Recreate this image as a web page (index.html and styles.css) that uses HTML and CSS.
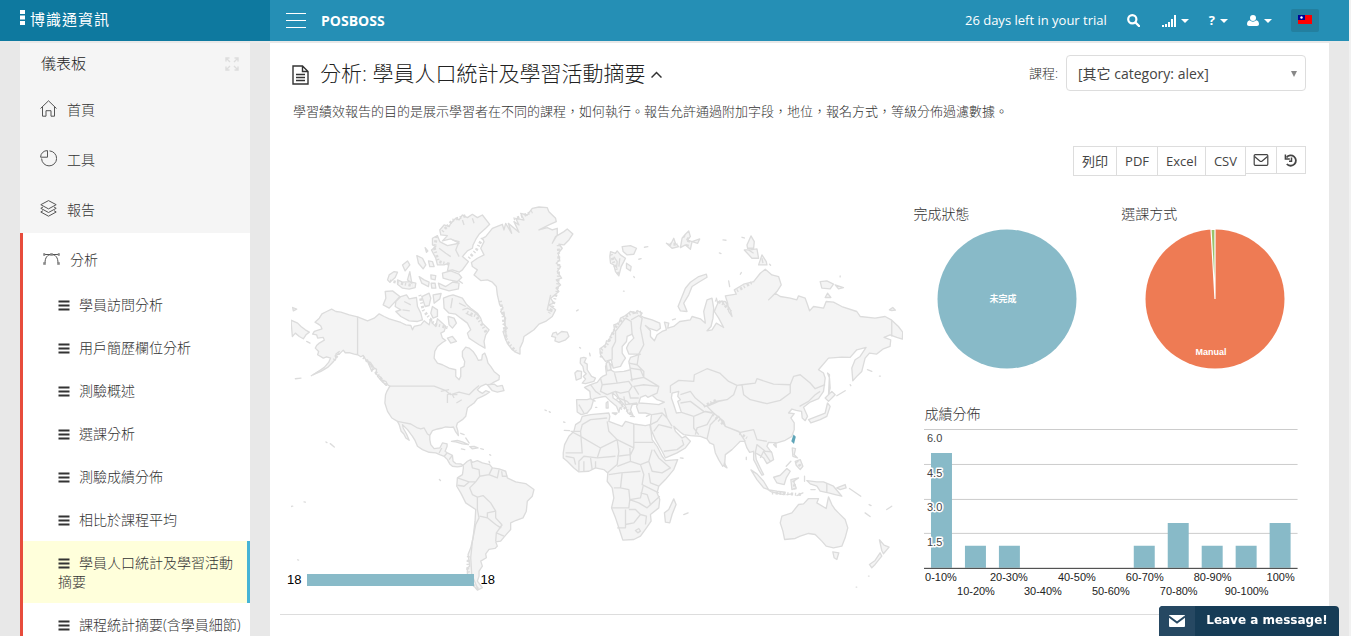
FILE: index.html
```html
<!DOCTYPE html>
<html lang="zh-Hant">
<head>
<meta charset="utf-8">
<title>POSBOSS</title>
<link rel="stylesheet" href="styles.css">
</head>
<body>
<svg class="defs" aria-hidden="true">
  <symbol id="lines" viewBox="0 0 12 11"><path d="M.5 1.500h11M.5 5.500h11M.5 9.500h11" stroke="currentColor" stroke-width="1.800"/></symbol>
  <symbol id="caret" viewBox="0 0 8 4"><path d="M0 0h8L4 4z" fill="currentColor"/></symbol>
</svg>

<header class="topbar">
  <a class="brand" href="#">
    <svg width="5" height="16" viewBox="0 0 5 16"><path d="M0 0h5v4H0zM0 5.500h5v4H0zM0 11h5v4H0z" fill="#fff"/></svg>
    <span>博識通資訊</span>
  </a>
  <div class="topmain">
    <button class="menu" aria-label="Menu"><svg width="20" height="15" viewBox="0 0 20 15"><path d="M0 .5h20M0 7.500h20M0 14.500h20" stroke="#fff"/></svg></button>
    <a class="site" href="#">POSBOSS</a>
    <span class="trial">26 days left in your trial</span>
    <button class="tool search" aria-label="Search"><svg width="13" height="13" viewBox="0 0 13 13"><circle cx="5.300" cy="5.300" r="4.100" fill="none" stroke="#fff" stroke-width="2.200"/><path d="M8.500 8.500 12 12" stroke="#fff" stroke-width="2.400" stroke-linecap="round"/></svg></button>
    <button class="tool signal" aria-label="Status"><svg width="14" height="12" viewBox="0 0 14 12"><path d="M0 10h2v2H0zM3 9h2v3H3zM6 7h2v5H6zM9 4h2v8H9zM12 0h2v12h-2z" fill="#fff"/></svg><svg width="8" height="4"><use href="#caret"/></svg></button>
    <button class="tool help" aria-label="Help"><b>?</b><svg width="8" height="4"><use href="#caret"/></svg></button>
    <button class="tool user" aria-label="User"><svg width="12" height="11" viewBox="0 0 12 11"><circle cx="6" cy="3" r="3" fill="#fff"/><path d="M2.700 5.200C1 5.500 0 7 0 9c0 1.300.8 2 2 2h8c1.200 0 2-.7 2-2 0-2-1-3.500-2.700-3.800a4.500 4.500 0 0 1-6.600 0z" fill="#fff"/></svg><svg width="8" height="4"><use href="#caret"/></svg></button>
    <button class="flag" aria-label="Language"><svg width="14" height="9" viewBox="0 0 14 9"><path d="M0 0h14v9H0z" fill="#f00"/><path d="M0 0h7v5H0z" fill="#000095"/><circle cx="3.500" cy="2.500" r="1.200" fill="#fff"/></svg></button>
  </div>
</header>

<div class="page">
  <nav class="side">
    <div class="side-title"><span>儀表板</span>
      <svg width="14" height="14" viewBox="0 0 14 14" fill="none" stroke="#ddd" stroke-width="1.400"><path d="M1 4.500V1h3.500M1 1l4 4M9.500 1H13v3.500M13 1 9 5M1 9.500V13h3.500M1 13l4-4M13 9.500V13H9.500M13 13 9 9"/></svg>
    </div>
    <a class="item" href="#"><svg width="17" height="17" viewBox="0 0 17 17" fill="none" stroke="#555"><path d="M.5 8.500 8.500.8l8 7.700M2.500 7v9.200h3.500v-5.500h5v5.500h3.500V7"/></svg>首頁</a>
    <a class="item" href="#"><svg width="17" height="17" viewBox="0 0 17 17" fill="none" stroke="#555"><path d="M9.500.9A7.500 7.500 0 1 1 1.600 8.500"/><path d="M7.500 7.200V.6a6.600 6.600 0 0 0-6.900 6.600z"/></svg>工具</a>
    <a class="item" href="#"><svg width="17" height="17" viewBox="0 0 17 17" fill="none" stroke="#555"><path d="M8.500.6.8 4.700l7.700 4.200 7.700-4.200zM3 7 .8 8.300l7.700 4.200 7.700-4.200L14 7M3 10.700.8 12l7.700 4.200 7.700-4.200-2.200-1.300"/></svg>報告</a>
    <section class="open">
      <a class="item" href="#"><svg width="17" height="17" viewBox="0 0 17 17" fill="none" stroke="#555"><path d="M2 4.500h13M2 13C2 7.500 4.500 4.500 8.500 4.500S15 7.500 15 13"/><path d="M.5 3.500h1.500v2H.5zM7.500 3.500h2v2h-2zM15 3.500h1.500v2H15zM.5 12.500h2v2h-2zM14.500 12.500h2v2h-2z" stroke="#888" fill="#888" stroke-width=".6"/></svg>分析</a>
      <a class="sub" href="#"><svg width="12" height="11"><use href="#lines"/></svg>學員訪問分析</a>
      <a class="sub" href="#"><svg width="12" height="11"><use href="#lines"/></svg>用戶簡歷欄位分析</a>
      <a class="sub" href="#"><svg width="12" height="11"><use href="#lines"/></svg>測驗概述</a>
      <a class="sub" href="#"><svg width="12" height="11"><use href="#lines"/></svg>選課分析</a>
      <a class="sub" href="#"><svg width="12" height="11"><use href="#lines"/></svg>測驗成績分佈</a>
      <a class="sub" href="#"><svg width="12" height="11"><use href="#lines"/></svg>相比於課程平均</a>
      <a class="sub current" href="#"><svg width="12" height="11"><use href="#lines"/></svg>學員人口統計及學習活動摘要</a>
      <a class="sub" href="#"><svg width="12" height="11"><use href="#lines"/></svg>課程統計摘要(含學員細節)</a>
    </section>
  </nav>

  <main class="main">
    <div class="head">
      <h1>
        <svg width="17" height="20" viewBox="0 0 17 20" fill="none" stroke="#333" stroke-width="1.400"><path d="M1 1h9.500L16 6.500V19H1zM10.500 1v5.500H16M4 9.500h9M4 12.500h9M4 15.500h9"/></svg>
        <span>分析: 學員人口統計及學習活動摘要</span>
        <svg width="11" height="7" viewBox="0 0 11 7" fill="none" stroke="#333" stroke-width="1.500"><path d="M.5 6.500l5-5 5 5"/></svg>
      </h1>
      <label class="course-label" for="course">課程:</label>
      <div class="select">
        <select id="course"><option>[其它 category: alex]</option></select>
        <svg width="6" height="6" viewBox="0 0 6 6"><path d="M0 0h6L3 6z" fill="#888"/></svg>
      </div>
    </div>
    <p class="intro">學習績效報告的目的是展示學習者在不同的課程，如何執行。報告允許通過附加字段，地位，報名方式，等級分佈過濾數據。</p>
    <div class="exports">
      <button>列印</button><button>PDF</button><button>Excel</button><button>CSV</button><button class="ico" aria-label="Email"><svg width="16" height="12" viewBox="0 0 16 12" fill="none" stroke="#444" stroke-width="1.200"><rect x="1.200" y=".7" width="13.600" height="10.600" rx="1"/><path d="M1.500 2.500 6.800 7q1.200.9 2.400 0l5.300-4.500"/></svg></button><button class="ico" aria-label="History"><svg width="14" height="13" viewBox="0 0 14 13" fill="none" stroke="#444" stroke-width="1.800"><path d="M2.500 3.500A5.200 5.200 0 1 1 2.800 10"/><path d="M1.400.5v4.400h4.400M7.500 3.500v3.700H5" stroke-width="1.500"/></svg></button>
    </div>

    <div class="report">
      <div class="map">
        <svg class="world" viewBox="15 30 1840 1170" role="img" aria-label="World map">
          <g class="land">
            <path d="M215 366 190 360 165 352 150 350 137 343 122 350 108 357 100 370 87 382 97 388 104 393 108 402 85 410 80 418 92 420 95 430 112 428 115 436 100 445 92 452 88 460 98 470 95 480 112 490 122 486 134 490 128 503 115 518 100 528 82 540 105 530 125 518 140 503 150 492 148 482 160 478 172 466 178 474 192 474 205 478 215 480 225 486 232 482 240 496 255 505 262 518 272 524 270 538 285 548 290 558 300 560 305 570 312 574 303 590 299 600 297 625 305 650 318 670 335 680 340 690 346 710 354 718 360 730 370 737 362 718 352 700 350 690 365 705 380 725 388 738 395 755 410 765 430 773 450 775 462 780 475 785 485 795 492 808 500 815 515 817 527 815 532 812 525 808 510 807 502 800 500 782 485 775 478 770 484 755 484 748 470 745 462 760 445 762 435 750 432 735 432 722 440 708 455 703 470 700 480 697 495 698 503 697 510 712 518 723 516 708 512 695 515 685 530 675 540 665 543 650 545 640 555 632 565 625 575 612 590 605 600 600 612 592 600 588 590 596 580 590 575 585 585 575 600 568 610 572 625 562 640 555 641 543 625 530 615 515 607 505 603 490 597 475 590 480 588 495 578 497 572 485 562 470 550 460 540 457 530 470 530 485 537 500 535 515 525 520 525 545 520 555 510 545 510 525 490 520 470 510 455 505 445 490 447 470 455 455 470 443 480 437 470 430 465 415 475 410 480 395 470 385 455 372 450 395 440 385 435 370 430 390 415 378 405 390 385 395 380 405 375 392 360 390 345 383 330 378 310 372 295 365 280 357 265 370 245 378 230 372Z"/>
            <path d="M620 100 650 88 655 105 660 85 678 115 668 85 700 112 685 80 700 90 690 70 715 75 705 55 725 60 740 40 760 36 785 38 790 50 810 70 812 80 790 90 760 105 785 98 800 105 815 100 815 120 800 145 810 125 835 110 845 102 862 117 850 135 835 150 820 148 830 160 818 175 822 195 812 205 825 215 815 230 828 250 812 255 825 270 812 280 820 290 808 300 795 310 805 325 790 330 810 345 800 365 780 380 760 388 745 405 730 415 715 425 712 440 703 460 703 478 690 472 680 465 668 450 660 435 652 410 665 400 655 390 660 370 645 350 652 338 642 330 635 300 632 275 620 262 605 255 585 257 565 240 575 225 560 215 557 203 575 190 595 180 585 160 595 140 590 130 600 125Z"/>
            <path d="M462 105 475 90 490 95 495 85 510 70 520 75 530 60 545 68 560 58 575 68 590 60 612 88 600 100 580 118 572 130 562 150 560 160 545 168 530 185 548 200 530 225 520 232 500 225 485 228 490 205 475 210 455 210 450 190 437 165 450 155 440 150 440 130 455 122 462 140 485 152 520 145 495 132 470 138 485 122 465 120Z"/>
            <path d="M470 235 495 228 520 238 528 248 515 260 490 255 472 250ZM458 265 480 275 500 262 520 265 518 282 490 288 462 280ZM298 290 320 288 342 305 330 318 310 340 292 330 300 310ZM330 320 345 305 362 300 370 312 392 308 395 335 405 355 410 375 395 380 370 378 345 365 330 350 345 345 328 335ZM408 305 430 295 435 310 430 332 418 335ZM442 300 466 296 462 312 445 325ZM440 335 455 345 455 365 442 370 435 355ZM473 310 490 303 502 300 530 310 542 328 555 340 575 355 585 370 590 385 610 405 600 420 595 440 598 460 580 450 565 440 550 430 545 415 555 405 545 385 525 370 510 358 490 355 475 340ZM487 365 505 370 512 385 500 400 490 390ZM485 430 500 425 512 440 495 445ZM310 240 325 230 335 232 328 248 312 262 305 255ZM335 255 350 262 370 260 390 265 388 278 370 283 350 280 335 268ZM350 210 365 198 372 210 358 228ZM393 182 410 190 420 210 412 222 398 205ZM428 198 440 200 445 215 432 215ZM400 245 415 255 430 262 428 275 408 265ZM435 240 450 242 448 255 436 252ZM436 265 448 265 450 280 438 280ZM418 158 426 168 422 172ZM372 230 378 265 365 255ZM520 258 530 265ZM15 376 35 385 45 395 58 405 70 412 60 420 52 432 40 425 28 415 19 425ZM20 338 32 343 22 348ZM62 440 72 445ZM245 500 262 518 258 530ZM275 545 290 560 302 572 290 562ZM150 478 160 470ZM28 552 45 550ZM76 543 98 530ZM605 570 625 568 635 575 650 572 655 588 635 592 620 588Z"/>
            <path d="M802 415 812 412 815 420 828 410 845 412 850 425 840 435 820 443 808 438 810 428 798 425ZM868 535 875 528 888 530 887 550 872 556ZM885 490 895 488 902 490 896 503 905 508 905 525 918 545 930 550 925 560 900 567 890 565 900 553 893 545 902 537 895 530 892 515 884 505ZM873 348 878 345ZM882 458 885 460ZM912 475 914 483Z"/>
            <path d="M497 740 515 737 530 742 548 750 530 748 510 742ZM552 756 565 755 577 760 560 763ZM585 762 593 764ZM527 763 537 765ZM525 716 535 720ZM540 730 550 745ZM612 780 615 782ZM610 800 612 805ZM120 742 123 744ZM133 747 145 757ZM461 855 464 858ZM10 937 20 935ZM54 922 58 923ZM35 1096 38 1097ZM778 646 782 648ZM791 651 794 653ZM834 682 838 683ZM836 707 852 708Z"/>
            <path d="M532 812 545 800 555 795 560 803 575 798 590 805 612 810 620 820 640 823 660 830 665 850 690 862 720 867 745 885 740 905 725 920 722 950 712 970 690 978 675 985 675 1005 660 1022 645 1040 630 1042 635 1055 628 1062 610 1065 600 1078 602 1090 585 1100 590 1115 580 1130 580 1145 575 1160 590 1180 575 1187 560 1170 545 1140 545 1120 552 1115 550 1100 547 1080 555 1060 562 1030 568 980 570 945 540 925 525 895 513 875 515 850 530 840 533 820Z"/>
          </g>
          <g class="line">
            <path d="M215 366V480M312 574H445L480 588 495 600 520 592 550 600 565 585 580 572M335 680 350 683 375 688 395 700 405 703 415 700 425 718 432 722M460 775 468 760M475 785 484 775M490 795 500 782"/>
            <path d="M555 795 560 820 580 825 582 845 570 862 552 880 560 900 575 908 575 945 580 970 570 990 560 1040 555 1090 558 1140 575 1180M515 872 535 875 550 862M575 908 592 903 615 925 630 950 605 955 605 970 582 965M630 950 630 970 648 990 645 1000 630 990 605 970M650 990 632 1015 630 1040M632 1015 655 1025M582 845 610 840 620 820M610 840 635 850 640 825M648 830 650 845 665 845M515 850 550 862 570 862"/>
            <path d="M465 590 490 585M485 625 485 600 495 595M505 610 500 600 515 600M512 625 528 615M500 135 520 140 510 165 520 185M560 70 565 85M530 75 535 90M460 160 480 175 495 185M500 310 495 340M520 325 540 335M540 355 560 365M355 320 375 330M350 345 372 348M655 350 662 430M795 300 785 345 800 350M530 345 545 340 565 350 580 365"/>
          </g>
          <g class="fjord">
            <path d="M232 488 255 508 266 528 282 548 302 570M544 352 572 364 590 392 602 414M644 318 652 360 656 400 664 440 690 470M818 150 820 200 818 250 814 290 800 340 790 355M684 72 715 62 740 50M548 1085 546 1125 556 1165 578 1185M452 125 446 160 458 200 490 208M470 110 500 76 540 62M312 258 340 264 380 272M402 300 412 345 445 388 490 400M590 130 572 165 545 195M160 474 140 502"/>
          </g>
          <g class="land" transform="translate(915)">
            <path d="M30 480 28 462 45 450 48 438 55 440 62 420 72 405 70 390 85 385 90 370 105 362 120 350 135 355 140 347 155 355 150 362 160 368 185 375 208 385 210 400 200 408 175 400 165 392 180 408 180 425 192 438 200 420 215 410 228 405 222 382 235 385 232 400 250 395 268 380 300 375 305 365 330 372 345 385 340 350 350 315 365 310 370 340 368 370 362 395 350 408 365 405 378 385 395 395 400 398 385 370 372 350 378 335 385 320 405 320 420 345 425 365 415 350 412 325 405 303 438 298 432 285 460 268 490 260 510 235 525 223 545 240 565 245 573 270 560 290 535 315 555 295 570 305 600 310 620 315 625 303 645 310 652 330 658 348 670 335 700 340 708 320 730 322 755 335 800 350 810 365 855 370 885 365 905 376 925 395 938 412 937 433 920 428 900 420 882 428 902 435 900 455 880 462 860 478 838 475 825 490 815 530 800 545 788 558 785 520 795 495 810 485 828 458 800 465 780 488 755 487 715 490 685 525 700 535 705 550 700 590 685 612 660 622 640 638 652 665 645 678 636 670 634 650 618 647 605 643 595 655 612 657 602 670 612 685 612 705 605 725 585 737 560 745 535 743 530 755 545 775 550 795 530 807 520 790 505 780 495 775 498 795 510 820 520 840 515 842 505 825 498 810 490 795 490 770 478 773 470 760 463 740 450 740 440 750 425 765 405 780 403 810 397 815 385 795 375 775 370 750 358 745 350 733 330 725 300 723 280 720 270 713 250 695 255 710 275 730 285 725 300 740 285 760 260 775 225 790 215 770 195 735 182 705 180 690 183 660 165 655 145 655 138 635 142 628 125 630 120 645 128 663 112 655 105 635 92 620 78 605 65 593 68 610 90 625 98 635 88 640 85 653 78 635 60 620 45 605 32 607 10 612 2 640-10 655-28 660-40 652-42 615-10 615 0 612-2 590-18 578 0 570 20 563 30 550 36 545 48 540 45 515 52 500 62 510 60 525 72 532 100 530 120 525 115 500 120 488 150 478 115 478 108 460 115 445 130 430 125 418 110 425 108 440 95 455 95 475 105 490 98 500 90 515 68 520 62 495 45 500Z"/>
            <path d="M-25 665 0 660 55 655 58 665 55 680 75 688 95 695 105 680 130 688 165 693 178 690 182 710 185 735 200 755 215 785 225 798 262 795 250 825 225 855 205 875 200 895 208 915 205 940 180 960 182 980 168 1000 150 1025 130 1035 97 1037 85 1000 75 970 63 940 70 910 65 880 50 860 52 835 40 825 15 820-5 830-35 832-50 820-70 800-82 790-82 775-78 750-65 725-50 710-45 690-30 680Z"/>
            <path d="M250 913 257 930 245 960 238 985 225 983 222 955 235 945ZM583 1035 578 1010 570 985 575 965 605 955 625 930 640 928 655 912 685 912 680 925 708 942 715 907 725 930 735 945 745 955 765 975 773 1000 765 1030 755 1055 730 1060 708 1055 695 1040 675 1020 655 1017 630 1025 615 1032ZM728 1072 746 1075 740 1095 732 1090ZM868 1036 882 1052 897 1058 880 1078 875 1068ZM870 1075 875 1085 855 1110 845 1120 838 1110 855 1098ZM482 826 500 838 520 860 535 885 520 880 500 855ZM532 885 560 890 585 893 580 900 545 893ZM550 848 570 842 590 822 600 830 588 850 582 870 560 865ZM602 855 625 850 610 860 618 880 605 885ZM590 900 605 898ZM620 903 638 895ZM606 760 616 762 612 780 622 790 608 785ZM615 800 630 795 638 815 630 825 618 812ZM588 815 602 800ZM650 858 680 862 700 862 730 875 755 905 735 900 715 895 690 890 680 875 660 868ZM740 880 765 870 768 880 750 885ZM778 882 812 905ZM837 930 843 933ZM825 955 840 966ZM890 945 905 935ZM655 675 680 665 705 655 712 625 720 635 710 665 690 675 662 685ZM705 610 725 590 735 600 715 620ZM712 535 718 550 720 580 715 600 718 540ZM740 603 765 588ZM780 570 782 573ZM550 750 557 745 558 758ZM402 805 410 820 402 815ZM468 788V795ZM270 790 278 791ZM280 960 293 955ZM47 625 52 620 53 640 47 640ZM65 655 80 655 75 660ZM15 638H19ZM120 665 132 666ZM168 665 178 660ZM643 845V860ZM662 885H675ZM835 1145H837ZM798 1178H800Z"/>
            <path d="M348 238 350 247 325 262 305 275 295 300 280 325 290 350 270 348 263 335 275 305 285 280 300 262 325 245ZM60 170 75 175 80 168 90 180 105 190 100 200 92 215 85 243 75 230 70 210 60 205 58 185ZM95 155 120 152 138 160 130 178 110 180 98 170ZM108 205 122 215 120 228 108 220ZM228 145 240 150 250 130 255 145 265 155 245 160ZM275 130 285 118 295 108 300 125 290 135 305 140 328 132 322 145 305 140 300 163 285 150 270 158ZM470 150 482 123 492 140 490 160 472 160ZM462 165 480 165 500 162 505 190 485 190ZM505 210 515 180 528 200 530 210ZM690 260 710 258 730 268 720 282 695 280ZM735 270 760 278 745 282ZM705 308 712 295 722 308ZM898 345 908 338 916 346 905 347ZM162 157 172 155ZM145 193 152 191ZM398 135 407 136ZM387 174 392 176ZM455 127 462 129ZM450 238 453 233ZM415 258 418 275ZM130 245 132 248ZM99 289H101ZM246 375 255 372ZM832 525 845 530ZM868 544H871ZM750 243V246ZM47 505 55 500 62 525 50 528ZM378 310 382 325ZM395 318 402 330ZM538 208 541 211Z"/>
          </g>
          <g class="sea" transform="translate(915)">
            <path d="M145 625 150 608 165 602 172 608 185 602 200 615 222 622 205 630 175 627ZM245 595 265 590 262 605 270 615 262 620 273 653 258 655 250 630 243 610Z"/>
          </g>
          <g class="line" transform="translate(915)">
            <path d="M65 495 65 460 75 440 75 410 90 390 105 370 122 380 125 418M122 375 145 362 155 370 150 400 160 450 145 478M145 478 140 510 160 530 160 548 205 575 200 595 185 602M240 595 240 573 265 557 310 560 312 540 350 522 388 535 415 560 440 572 455 570 495 565 500 552 550 568 600 570 610 545 630 540 660 565 675 582 705 570M455 570 460 600 480 615 530 627 570 617 600 595 600 570M440 572 430 600 410 615 385 620 350 635 370 655 400 680 405 695 450 713 490 705 500 735 530 740M270 600 300 590 315 610 345 635 375 620 410 615M270 625 300 620 340 650 365 655M273 653 310 665 345 650 370 655 350 690 320 700 315 720M310 665 310 700 325 720M350 733 360 690 385 665 405 695 445 710 465 740M222 640 230 670 245 695M185 660 215 655 230 670M180 690 200 680 215 660M190 710 205 690 245 700M220 770 260 765 280 750 275 735M495 775 500 750 525 770 545 772M510 790 520 770 540 800M628 635 655 620 675 600 690 590M905 376V425M710 865V895M0 570 15 590 30 600M30 550 35 570 30 590 50 600 75 590 90 595 115 590 125 575 115 560 80 565 72 535M35 570 80 565M120 525 125 560M115 590 120 610 145 610M75 590 85 610 110 620 120 630M115 505 140 510M118 520 150 525 160 548 120 555M100 605 105 630 140 625M-35 630-20 655M0 612 15 620M145 600 130 575 160 570 205 575"/>
            <path d="M-60 710-30 710-25 690 0 675 50 670M-30 710-25 775-75 775M-55 712-30 725 30 760 80 735 55 710 50 680M80 735 130 760V688M130 743H188M30 760 20 790-20 785-35 800-35 830M-75 785-50 790-45 810M80 735 85 770 80 810 50 835M80 785 120 780 130 760M20 790 75 785M0 790 5 825M-20 800-20 830M15 800 15 820M118 760 120 800 150 810 175 800 185 765M80 815 120 800M175 800 185 830 215 835 240 820 205 790 190 765M150 810 160 840 155 870 205 895M175 835 180 865 205 875M55 840 90 835 150 830M95 835 90 880 70 880M90 880 115 885 118 915 150 910 158 875M63 940H115L118 915 145 925 170 940 208 905M150 895 170 900 180 930M105 945 105 1000 80 1000M105 990 130 985 150 960 135 945 115 945M150 960 168 965 165 990M135 1008 145 1002 150 1010 142 1015Z"/>
            <path d="M70 185 80 200 78 220M88 190 85 215M475 165 490 175M515 190 518 205"/>
          </g>
          <g class="fjord" transform="translate(915)">
            <path d="M32 488 32 466 50 448 66 418 78 392 104 366 124 354 152 352M62 178 72 210 84 238M238 148 262 148M280 124 296 134 290 154M80 610 100 636 122 660M92 640 86 650M440 288 490 260M375 315 400 328 422 350M448 716 470 730M368 660 400 690M610 858 615 885M545 895 635 900M620 800 634 820M340 635 380 615"/>
          </g>
          <path class="hit" d="M1521 739 1526 724 1529 727 1525 743Z"/>
        </svg>
        <div class="scale"><span>18</span><i></i><span>18</span></div>
      </div>

      <div class="charts">
        <div class="pies">
          <section>
            <h2>完成狀態</h2>
            <svg class="pie" width="140" height="140" viewBox="0 0 140 140"><circle cx="70" cy="70" r="69.500" fill="#88bac8"/><text x="66" y="73">未完成</text></svg>
          </section>
          <section>
            <h2>選課方式</h2>
            <svg class="pie" width="140" height="140" viewBox="0 0 140 140"><circle cx="70" cy="70" r="69.500" fill="#ee7b54"/><path d="M70 70 66 .5A69.500 69.500 0 0 1 70 .5z" fill="#9bc36a" stroke="#fff" stroke-width="1.200"/><text x="66" y="126">Manual</text></svg>
          </section>
        </div>
        <section class="grades">
          <h2>成績分佈</h2>
          <svg class="bars" viewBox="0 0 374 172">
            <path d="M0 .5h374M0 35.500h374M0 70.500h374M0 104.500h374" stroke="#ccc"/>
            <path d="M7 24h21v115H7zM41 117h21v22H41zM75 117h21v22H75zM210 117h21v22h-21zM244 94h21v45h-21zM278 117h21v22h-21zM312 117h21v22h-21zM346 94h21v45h-21z" fill="#88bac8"/>
            <path d="M0 139.500h374" stroke="#333"/>
            <g class="y"><text x="3" y="13">6.0</text><text x="3" y="48">4.5</text><text x="3" y="82">3.0</text><text x="3" y="117">1.5</text></g>
            <g class="x"><text x="17" y="152">0-10%</text><text x="52" y="166">10-20%</text><text x="85" y="152">20-30%</text><text x="119" y="166">30-40%</text><text x="153" y="152">40-50%</text><text x="187" y="166">50-60%</text><text x="221" y="152">60-70%</text><text x="255" y="166">70-80%</text><text x="289" y="152">80-90%</text><text x="323" y="166">90-100%</text><text x="357" y="152">100%</text></g>
          </svg>
        </section>
      </div>
    </div>
    <hr>
  </main>
</div>

<button class="chat">
  <span class="chat-icon"><svg width="16" height="12" viewBox="0 0 16 12"><rect width="16" height="12" rx="1" fill="#fff"/><path d="M0 1.500l8 6 8-6" fill="none" stroke="#264862" stroke-width="1.800"/></svg></span>
  <span class="chat-text">Leave a message!</span>
</button>
</body>
</html>
```

FILE: styles.css
```css
* { box-sizing: border-box; }
html { background: #f1f1f1; }
body {
  margin: 0 2px 0 0;
  height: 100vh;
  overflow: hidden;
  display: flex;
  flex-direction: column;
  background: #e8e8e8;
  color: #333;
  font: 300 14px/19px "Open Sans", "Noto Sans CJK TC", sans-serif;
}
button { font: inherit; color: inherit; background: none; border: 0; padding: 0; }
a { color: inherit; text-decoration: none; }
h1, h2, p { margin: 0; font-weight: 300; }
svg { flex: none; }
.defs { position: absolute; width: 0; height: 0; }

.topbar { display: flex; flex: none; height: 41px; color: #fff; background: #258fb5; }
.brand {
  display: flex; gap: 5px; width: 270px; padding: 10px 0 0 20px;
  background: #0e799f; font-size: 15px; font-weight: 400; letter-spacing: 1px;
}
.topmain { flex: 1; display: flex; align-items: center; padding-right: 30px; }
.menu { display: flex; margin: 0 15px 0 16px; }
.site { font-size: 14px; font-weight: 700; }
.trial { margin-left: auto; font-size: 13px; font-weight: 400; }
.tool { display: flex; align-items: center; gap: 5px; }
.tool b { font-size: 13px; font-weight: 700; }
.search { margin: 0 22px 0 20px; }
.signal { margin-right: 20px; }
.help { margin-right: 19px; }
.user { margin-right: 19px; }
.flag { display: flex; justify-content: center; padding: 6px 0 8px; width: 28px; background: #237f9f; border-radius: 2px; }

.page { flex: 1; min-height: 0; display: flex; gap: 20px; padding: 2px 20px 0; }
.side { flex: none; width: 230px; background: #f5f5f5; }
.side-title {
  display: flex; justify-content: space-between; align-items: center;
  height: 40px; padding: 1px 11px 0 21px; font-size: 15px; color: #222;
}
.item { display: flex; align-items: center; gap: 10px; height: 50px; padding: 2px 0 0 20px; }
.item svg { margin-bottom: 2px; }
.open { background: #fff; border-left: 3px solid #e74c3c; }
.sub { display: block; padding: 12px 2px 12px 35px; border-right: 3px solid transparent; }
.sub svg { margin-right: 9px; vertical-align: -1px; }
.current { background: #ffffdb; border-right-color: #46b4d6; }

.main { flex: 1; min-width: 0; background: #fff; padding: 12px 10px 0; }
.head { display: flex; align-items: center; padding: 0 13px 0 12px; }
h1 { display: flex; align-items: center; font-size: 21px; line-height: 28px; color: #222; margin-right: auto; }
h1 > svg { margin-top: 3px; }
h1 span { margin: 0 6px 0 11px; }
.course-label { font-size: 13px; margin-right: 8px; }
.select { position: relative; width: 240px; }
.select select {
  width: 100%; height: 36px; padding: 0 11px; appearance: none; background: #fff;
  border: 1px solid #ddd; border-radius: 4px; font: inherit; font-weight: 400; color: #444;
}
.select svg { position: absolute; right: 9px; top: 16px; }
.intro { padding: 11px 13px 0; font-size: 13px; }
.exports { display: flex; justify-content: flex-end; align-items: flex-start; padding: 25px 13px 0; font-size: 13px; font-weight: 400; color: #444; }
.exports button { height: 30px; padding: 0 8px; border: 1px solid #ddd; margin-left: -1px; }
.exports .ico { display: flex; align-items: center; height: 28px; padding: 0 7px; }

.report { display: grid; grid-template-columns: 613fr 395fr; padding: 28px 21px 0 11px; }
.map { position: relative; }
.world { display: block; width: 100%; margin-top: 1px; }
.land path { fill: #f4f4f4; }
.sea path { fill: #fff; }
.line path { fill: none; }
.land, .sea, .line { stroke: #dcdcdc; stroke-width: 4; stroke-linejoin: round; }
.fjord { fill: none; stroke: #dcdcdc; stroke-width: 9; stroke-dasharray: 4 7 7 5; }
.hit { fill: #5fa5b8; stroke: #5fa5b8; stroke-width: 5; }
.scale {
  position: absolute; left: -4px; bottom: 12px; display: flex; align-items: center; gap: 6px;
  font: 13px/18px "Liberation Sans", sans-serif; color: #000;
}
.scale i { width: 167px; height: 12px; background: #88bac8; }
.charts { padding-left: 10px; }
.charts h2 { font-size: 14px; line-height: 19px; }
.pies { display: grid; grid-template-columns: 208fr 177fr; }
.pie { display: block; margin: 6px 0 0 24px; }
.pie text { font: bold 9px "Liberation Sans", "Noto Sans CJK TC", sans-serif; fill: #fff; text-anchor: middle; }
.grades { padding: 35px 0 0 11px; }
.bars { display: block; width: 100%; margin-top: 6px; overflow: visible; }
.bars text { font: 11px "Liberation Sans", sans-serif; }
.y text { fill: #444; stroke: #fff; stroke-width: 3; paint-order: stroke; stroke-linejoin: round; }
.x text { fill: #222; text-anchor: middle; }
hr { margin: 13px 0 0; border: 0; border-top: 1px solid #ddd; }

.chat {
  position: fixed; right: 12px; bottom: 0; display: flex; width: 180px; height: 30px;
  overflow: hidden; border-radius: 4px 4px 0 0; background: #163c56; color: #fff;
}
.chat-icon { display: flex; align-items: center; justify-content: center; width: 36px; height: 100%; background: #264862; }
.chat-text { flex: 1; font: bold 12px/28px "DejaVu Sans", sans-serif; }
```
